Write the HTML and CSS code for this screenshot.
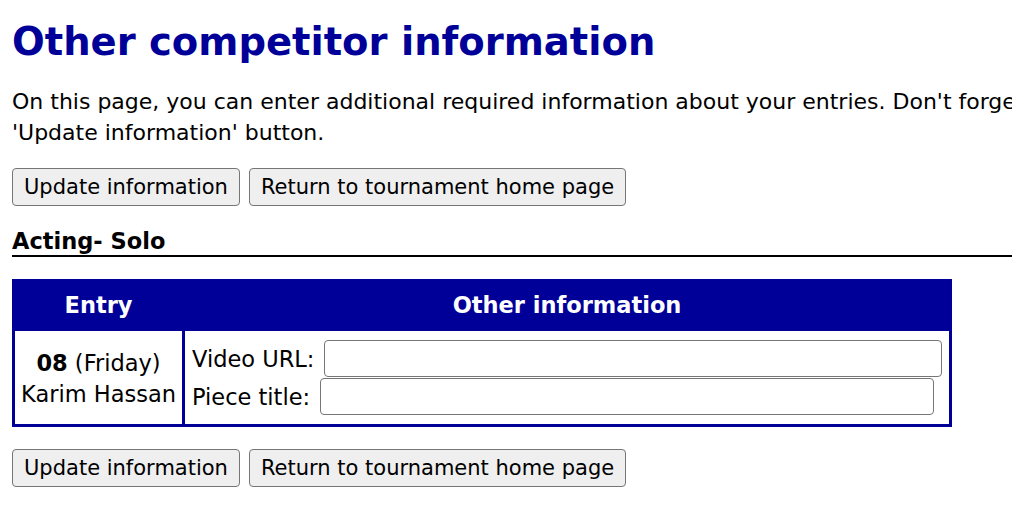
FILE: index.html
```html
<!DOCTYPE html>
<html lang="en">
  <head>
    <meta charset="UTF-8" />
    <meta name="viewport" content="width=device-width, initial-scale=1.0" />
    <title>Other competitor information</title>
    <link rel="stylesheet" href="styles.css">
  </head>
  <body>
    <div class="page">
      <h1>Other competitor information</h1>
      <p class="intro">
        On this page, you can enter additional required information about your entries. Don't forget to click the<br />
        'Update information' button.
      </p>
      <form action="/otherinfo" method="POST" autocomplete="off">
        <div class="actions">
          <button type="submit">Update information</button>
          <button type="button">Return to tournament home page</button>
        </div>

        <h3 class="event-title">Acting- Solo</h3>
        <table class="entries">
          <tr>
            <th class="entry-col">Entry</th>
            <th>Other information</th>
          </tr>
          <tr>
            <td class="entry-cell"><b>08</b> (Friday)<br />Karim Hassan</td>
            <td class="info-cell">
              <div class="field">
                <label for="video">Video URL:</label>
                <input type="text" id="video" name="video" />
              </div>
              <div class="field">
                <label for="title">Piece title:</label>
                <input type="text" id="title" name="title" />
              </div>
            </td>
          </tr>
        </table>

        <div class="actions actions-bottom">
          <button type="submit">Update information</button>
          <button type="button">Return to tournament home page</button>
        </div>
      </form>
    </div>
  </body>
</html>
```

FILE: styles.css
```css
html {
  overflow: hidden;
}
body {
  font-family: "DejaVu Sans", Verdana, sans-serif;
  margin: 12px;
  color: #000;
  background-color: #fff;
}
.page {
  width: 1300px;
}
h1 {
  color: #000099;
  font-size: 38.5px;
  margin: 8px 0 0;
  line-height: 44px;
}
.intro {
  font-size: 22px;
  line-height: 31px;
  margin: 22px 0 0;
  white-space: nowrap;
}
.actions {
  display: flex;
  gap: 9px;
  margin-top: 20px;
}
.actions button {
  font-family: inherit;
  font-size: 21px;
  height: 38px;
  padding: 0 11px;
  background-color: #efefef;
  border: 1px solid #767676;
  border-radius: 4px;
  color: #000;
}
.event-title {
  font-size: 22.5px;
  margin: 22px 0 0;
  padding: 0;
  line-height: 27px;
  border-bottom: 2px solid #000;
}
.entries {
  width: 940px;
  margin-top: 22px;
  border-spacing: 3px;
  background-color: #000099;
  font-size: 22.5px;
}
.entries th {
  color: #fff;
  height: 46px;
  padding: 0;
}
.entries .entry-col {
  width: 167px;
}
.entries td {
  background-color: #fff;
  padding: 9px 0 9px 7px;
}
.entry-cell {
  text-align: center;
  line-height: 31px;
  padding: 3px 0 0 !important;
}
.info-cell .field {
  display: flex;
  align-items: center;
  gap: 10px;
  height: 37px;
}
.info-cell .field + .field {
  margin-top: 1px;
}
.info-cell input {
  flex: 1;
  height: 37px;
  box-sizing: border-box;
  border: 1px solid #767676;
  border-radius: 4px;
  font-size: 20px;
  margin-right: 7px;
}
.info-cell .field:last-child input {
  margin-right: 15px;
}
.actions-bottom {
  margin-top: 22px;
}
```
